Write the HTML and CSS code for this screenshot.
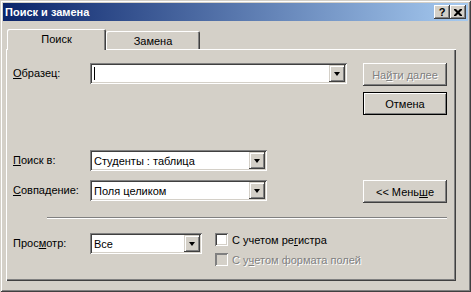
FILE: index.html
```html
<!DOCTYPE html>
<html lang="ru">

<head>
    <meta charset="UTF-8">
    <title>Поиск и замена</title>
    <link rel="stylesheet" href="styles.css">
</head>

<body>
    <div class="window">
        <div class="titlebar">
            <span class="title">Поиск и замена</span>
            <div class="caption-buttons">
                <span class="cap-btn help">?</span>
                <span class="cap-btn">
                    <svg width="8" height="7" viewBox="0 0 8 7">
                        <path d="M0 0h2l2 2 2-2h2v1L5.5 3.5 8 6v1H6L4 5 2 7H0V6l2.5-2.5L0 1z" fill="#000" />
                    </svg>
                </span>
            </div>
        </div>

        <div class="client">
            <div class="tabs">
                <div class="tab active">Поиск</div>
                <div class="tab">Замена</div>
            </div>

            <div class="panel">
                <div class="row">
                    <span class="label"><u>О</u>бразец:</span>
                    <div class="combo wide">
                        <span class="combo-text"><span class="caret"></span></span>
                        <span class="drop"><span class="arrow"></span></span>
                    </div>
                    <div class="btn disabled">На<u>й</u>ти далее</div>
                </div>

                <div class="row end gap-small">
                    <div class="btn default">Отмена</div>
                </div>

                <div class="row gap-big">
                    <span class="label"><u>П</u>оиск в:</span>
                    <div class="combo mid">
                        <span class="combo-text">Студенты : таблица</span>
                        <span class="drop"><span class="arrow"></span></span>
                    </div>
                </div>

                <div class="row gap-mid">
                    <span class="label"><u>С</u>овпадение:</span>
                    <div class="combo mid">
                        <span class="combo-text">Поля целиком</span>
                        <span class="drop"><span class="arrow"></span></span>
                    </div>
                    <div class="btn">&lt;&lt; Мень<u>ш</u>е</div>
                </div>

                <div class="separator"></div>

                <div class="row gap-sep">
                    <span class="label">Прос<u>м</u>отр:</span>
                    <div class="combo small">
                        <span class="combo-text">Все</span>
                        <span class="drop"><span class="arrow"></span></span>
                    </div>
                    <div class="check-list">
                        <div class="check">
                            <span class="box"></span>
                            <span>С учетом ре<u>г</u>истра</span>
                        </div>
                        <div class="check disabled">
                            <span class="box"></span>
                            <span>С у<u>ч</u>етом формата полей</span>
                        </div>
                    </div>
                </div>
            </div>
        </div>
    </div>
</body>

</html>
```

FILE: styles.css
```css
/* General */
body {
    margin: 0;
    font-family: "Liberation Sans", Arial, sans-serif;
    font-size: 11px;
    background: #d4d0c8;
    color: #000;
}

u {
    text-decoration: underline;
    text-underline-offset: 1px;
}

/* Window frame */
.window {
    width: 471px;
    height: 292px;
    box-sizing: border-box;
    padding: 3px;
    background: #d4d0c8;
    box-shadow: inset 1px 1px #d4d0c8, inset -1px -1px #404040,
        inset 2px 2px #fff, inset -2px -2px #808080;
}

.titlebar {
    height: 18px;
    display: flex;
    align-items: center;
    justify-content: space-between;
    padding: 0 2px 0 2px;
    background: linear-gradient(to right, #0a246a, #a6caf0);
}

.title {
    color: #fff;
    font-weight: bold;
    font-size: 11px;
}

.caption-buttons {
    display: flex;
}

.cap-btn {
    width: 16px;
    height: 14px;
    box-sizing: border-box;
    display: flex;
    align-items: center;
    justify-content: center;
    background: #d4d0c8;
    box-shadow: inset -1px -1px #404040, inset 1px 1px #fff,
        inset -2px -2px #808080;
}

.cap-btn.help {
    font-weight: bold;
    font-size: 11px;
    line-height: 12px;
}

/* Tabs */
.client {
    padding: 8px 11px 0 3px;
}

.tabs {
    display: flex;
    align-items: flex-end;
    height: 20px;
    padding-left: 1px;
}

.tab {
    box-sizing: border-box;
    width: 94px;
    height: 18px;
    padding-top: 4px;
    line-height: 13px;
    text-align: center;
    background: #d4d0c8;
    border-radius: 2px 2px 0 0;
    box-shadow: inset 1px 1px #fff, inset -1px 0 #404040, inset -2px 0 #808080;
}

.tab.active {
    width: 99px;
    height: 21px;
    margin-bottom: -1px;
    position: relative;
    z-index: 1;
}

.panel {
    box-sizing: border-box;
    width: 450px;
    height: 232px;
    padding: 14px 9px 0 7px;
    background: #d4d0c8;
    box-shadow: inset 1px 1px #fff, inset -1px -1px #404040,
        inset -2px -2px #808080;
}

/* Rows */
.row {
    display: flex;
    align-items: flex-start;
}

.row.end {
    justify-content: flex-end;
}

.gap-small {
    margin-top: 6px;
}

.gap-big {
    margin-top: 35px;
}

.gap-mid {
    margin-top: 9px;
}

.gap-sep {
    margin-top: 14px;
}

.label {
    width: 77px;
    flex-shrink: 0;
    line-height: 21px;
}

/* Combo boxes */
.combo {
    box-sizing: border-box;
    height: 21px;
    padding: 2px;
    display: flex;
    align-items: center;
    background: #fff;
    box-shadow: inset 1px 1px #808080, inset -1px -1px #fff,
        inset 2px 2px #404040, inset -2px -2px #d4d0c8;
}

.combo.wide {
    width: 257px;
}

.combo.mid {
    width: 177px;
}

.combo.small {
    width: 112px;
}

.combo-text {
    flex: 1;
    padding-left: 2px;
    display: flex;
    align-items: center;
    white-space: nowrap;
}

.caret {
    width: 1px;
    height: 13px;
    background: #000;
}

.drop {
    width: 16px;
    height: 17px;
    box-sizing: border-box;
    display: flex;
    align-items: center;
    justify-content: center;
    background: #d4d0c8;
    box-shadow: inset -1px -1px #404040, inset 1px 1px #d4d0c8,
        inset 2px 2px #fff, inset -2px -2px #808080;
}

.arrow {
    width: 0;
    height: 0;
    border-left: 3.5px solid transparent;
    border-right: 3.5px solid transparent;
    border-top: 4px solid #000;
}

/* Buttons */
.btn {
    width: 84px;
    height: 23px;
    box-sizing: border-box;
    margin-left: auto;
    display: flex;
    align-items: center;
    justify-content: center;
    background: #d4d0c8;
    box-shadow: inset -1px -1px #404040, inset 1px 1px #fff,
        inset -2px -2px #808080;
}

.btn.default {
    box-shadow: inset 0 0 0 1px #000, inset 2px 2px #fff,
        inset -2px -2px #808080;
}

.btn.disabled {
    color: #808080;
    text-shadow: 1px 1px #fff;
}

.separator {
    height: 1px;
    margin: 14px 0 0 34px;
    border-top: 1px solid #808080;
    border-bottom: 1px solid #fff;
    height: 0;
}

/* Checkboxes */
.check-list {
    display: flex;
    flex-direction: column;
    gap: 7px;
    margin-left: 13px;
}

.check {
    display: flex;
    align-items: center;
    gap: 4px;
    height: 13px;
    white-space: nowrap;
}

.box {
    width: 13px;
    height: 13px;
    box-sizing: border-box;
    background: #fff;
    box-shadow: inset 1px 1px #808080, inset -1px -1px #fff,
        inset 2px 2px #404040, inset -2px -2px #d4d0c8;
}

.check.disabled {
    color: #808080;
    text-shadow: 1px 1px #fff;
}

.check.disabled .box {
    background: #d4d0c8;
    box-shadow: inset 1px 1px #808080, inset -1px -1px #fff,
        inset 2px 2px #808080, inset -2px -2px #d4d0c8;
}
```
